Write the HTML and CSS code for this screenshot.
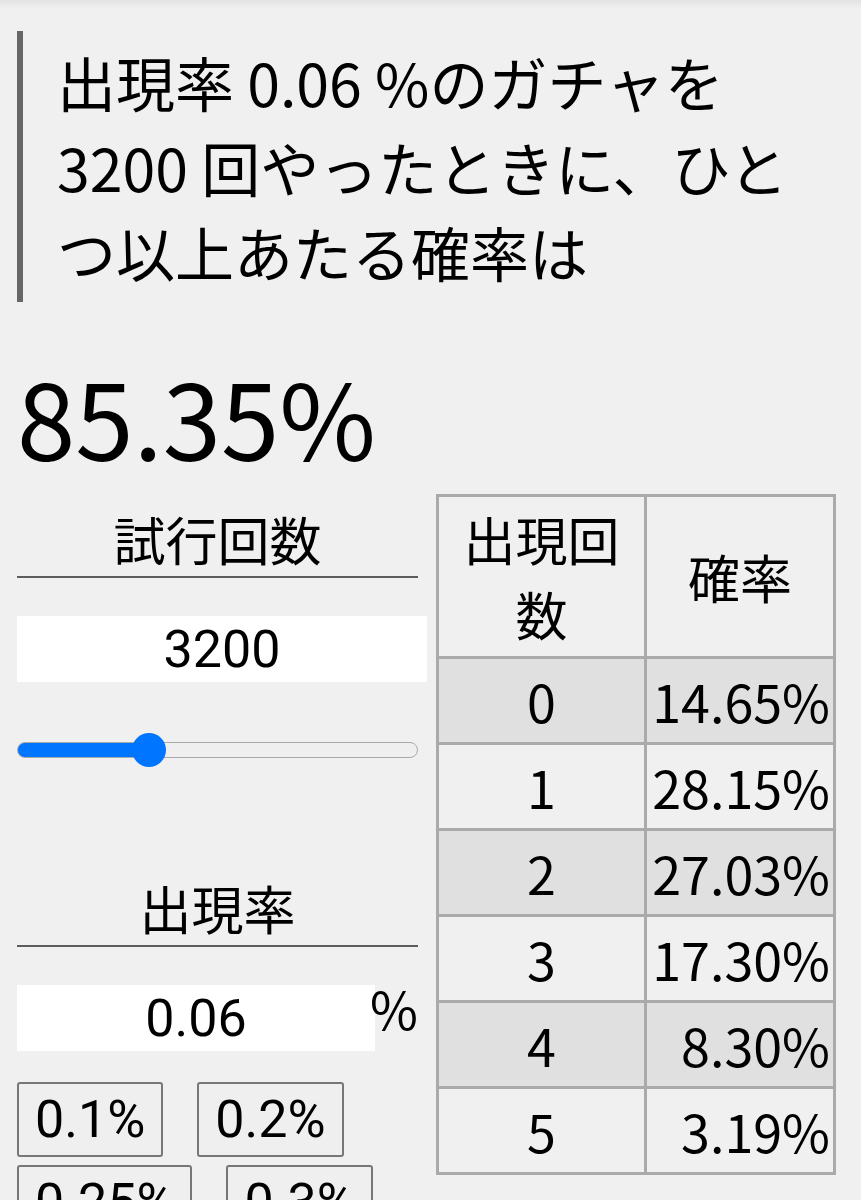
FILE: index.html
```html
<!DOCTYPE html>
<html lang="ja">
<head>
    <meta charset="UTF-8">
    <meta name="viewport" content="width=device-width, initial-scale=1.0">
    <title>ガチャ確率計算</title>
    <link rel="stylesheet" href="styles.css">
</head>
<body>
    <blockquote class="question">
        出現率 <span id="rateText">0.06</span> %のガチャを <span id="countText">3200</span> 回やったときに、ひとつ以上あたる確率は
    </blockquote>

    <div class="answer" id="answer">85.35%</div>

    <div class="main">
        <div class="controls">
            <div class="field">
                <div class="field-label">試行回数</div>
                <input type="text" class="num-input" id="countInput" value="3200">
                <input type="range" class="slider" id="countSlider" min="100" max="10000" value="3200" style="--fill: 33%">
            </div>

            <div class="field field-rate">
                <div class="field-label">出現率</div>
                <div class="rate-row">
                    <input type="text" class="num-input rate-input" id="rateInput" value="0.06">
                    <span class="unit">%</span>
                </div>
                <div class="presets">
                    <button class="preset">0.1%</button>
                    <button class="preset">0.2%</button>
                    <button class="preset">0.25%</button>
                    <button class="preset">0.3%</button>
                </div>
            </div>
        </div>

        <table class="dist">
            <colgroup>
                <col class="col-count">
                <col class="col-prob">
            </colgroup>
            <thead>
                <tr>
                    <th>出現回数</th>
                    <th>確率</th>
                </tr>
            </thead>
            <tbody>
                <tr><td>0</td><td class="prob">14.65%</td></tr>
                <tr><td>1</td><td class="prob">28.15%</td></tr>
                <tr><td>2</td><td class="prob">27.03%</td></tr>
                <tr><td>3</td><td class="prob">17.30%</td></tr>
                <tr><td>4</td><td class="prob">8.30%</td></tr>
                <tr><td>5</td><td class="prob">3.19%</td></tr>
            </tbody>
        </table>
    </div>
</body>
</html>
```

FILE: styles.css
```css
* {
    box-sizing: border-box;
}

html {
    background: #f0f0f0;
}

body {
    margin: 0;
    padding: 0 17px;
    color: #000;
    font-family: "Noto Sans CJK JP", sans-serif;
    background: linear-gradient(#e3e3e3, #f0f0f0 9px) no-repeat;
}

.question {
    margin: 31px 26px 0 0;
    padding: 8px 0 8px 34px;
    border-left: 6px solid #666;
    font-size: 59px;
}

.answer {
    margin-top: 37px;
    font-size: 105px;
}

.main {
    display: grid;
    grid-template-columns: 401px 397px;
    column-gap: 18px;
    align-items: start;
    margin-top: 3px;
}

.controls {
    padding-top: 7px;
}

.field-label {
    text-align: center;
    font-size: 52px;
    border-bottom: 2px solid #5c5c5c;
}

.num-input {
    display: block;
    width: 410px;
    height: 66px;
    margin-top: 38px;
    padding: 0;
    border: none;
    background: #fff;
    color: #000;
    font-family: Roboto, sans-serif;
    font-size: 52px;
    text-align: center;
}

.slider {
    -webkit-appearance: none;
    appearance: none;
    display: block;
    width: 401px;
    height: 34px;
    margin: 51px 0 0;
    background: transparent;
}

.slider::-webkit-slider-runnable-track {
    height: 16px;
    border: 1px solid #aaa;
    border-radius: 8px;
    background: linear-gradient(to right, #0075ff var(--fill), #efefef var(--fill));
}

.slider::-webkit-slider-thumb {
    -webkit-appearance: none;
    width: 34px;
    height: 34px;
    margin-top: -10px;
    border: none;
    border-radius: 50%;
    background: #0075ff;
}

.field-rate {
    margin-top: 103px;
}

.rate-row {
    display: flex;
    align-items: flex-start;
    height: 66px;
    margin-top: 38px;
}

.rate-row .rate-input {
    width: 358px;
    margin-top: 0;
}

.unit {
    margin-left: -5px;
    font-size: 52px;
    line-height: 46px;
}

.presets {
    display: flex;
    flex-wrap: wrap;
    column-gap: 34px;
    row-gap: 8px;
    margin-top: 31px;
}

.preset {
    padding: 5px 16px;
    border: 2px solid #777;
    border-radius: 3px;
    background: #efefef;
    color: #000;
    font-family: Roboto, sans-serif;
    font-size: 52px;
}

.dist {
    width: 397px;
    table-layout: fixed;
    border-collapse: collapse;
    border: 3px solid #aaa;
    font-size: 52px;
}

.col-count {
    width: 208px;
}

.col-prob {
    width: 189px;
}

.dist th,
.dist td {
    padding: 4px 3px;
    border: 3px solid #aaa;
    font-weight: normal;
    text-align: center;
}

.dist thead th {
    padding-bottom: 5px;
}

.dist td.prob {
    text-align: right;
    white-space: nowrap;
}

.dist tbody tr:nth-child(odd) {
    background: #e0e0e0;
}
```
